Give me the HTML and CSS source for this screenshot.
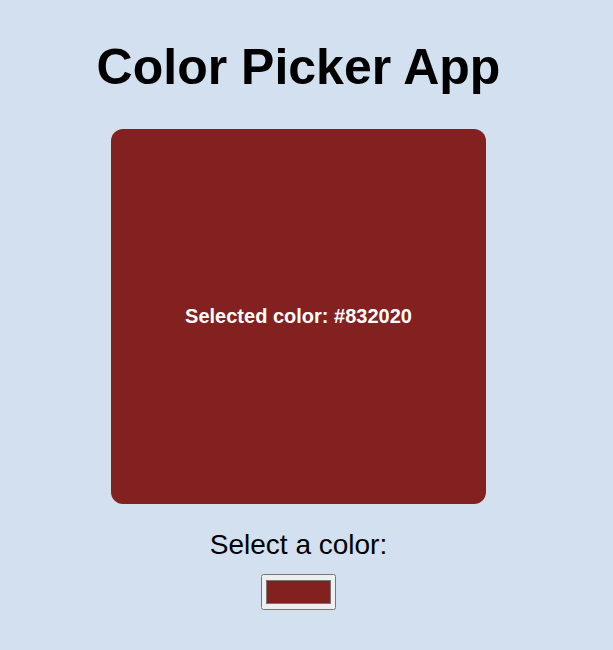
FILE: index.html
```html
<!DOCTYPE html>
<html>
<head>
<meta charset="utf-8">
<link rel="stylesheet" href="styles.css">
</head>
<body>
<main class="app">
  <h1 class="title">Color Picker App</h1>
  <div class="swatch" style="background-color: #832020;">
    <p class="swatch-text">Selected color: #832020</p>
  </div>
  <label class="picker-label" for="picker">Select a color:</label>
  <input class="picker" id="picker" type="color" value="#832020">
</main>
</body>
</html>
```
FILE: styles.css
```css
html, body {
  margin: 0;
  padding: 0;
  background: #d3e0f0;
  font-family: "Liberation Sans", Arial, sans-serif;
}
.app {
  width: 597px;
  display: flex;
  flex-direction: column;
  align-items: center;
}
.title {
  margin: 38px 0 0;
  font-size: 50px;
  font-weight: bold;
  line-height: 58px;
  color: #000;
}
.swatch {
  margin-top: 33px;
  width: 375px;
  height: 375px;
  border-radius: 12px;
  display: flex;
  align-items: center;
  justify-content: center;
}
.swatch-text {
  margin: 0;
  color: #fff;
  font-weight: bold;
  font-size: 20px;
}
.picker-label {
  margin-top: 25px;
  font-size: 28px;
  line-height: 32px;
  color: #000;
}
.picker {
  margin-top: 13px;
  width: 75px;
  height: 36px;
}
```
